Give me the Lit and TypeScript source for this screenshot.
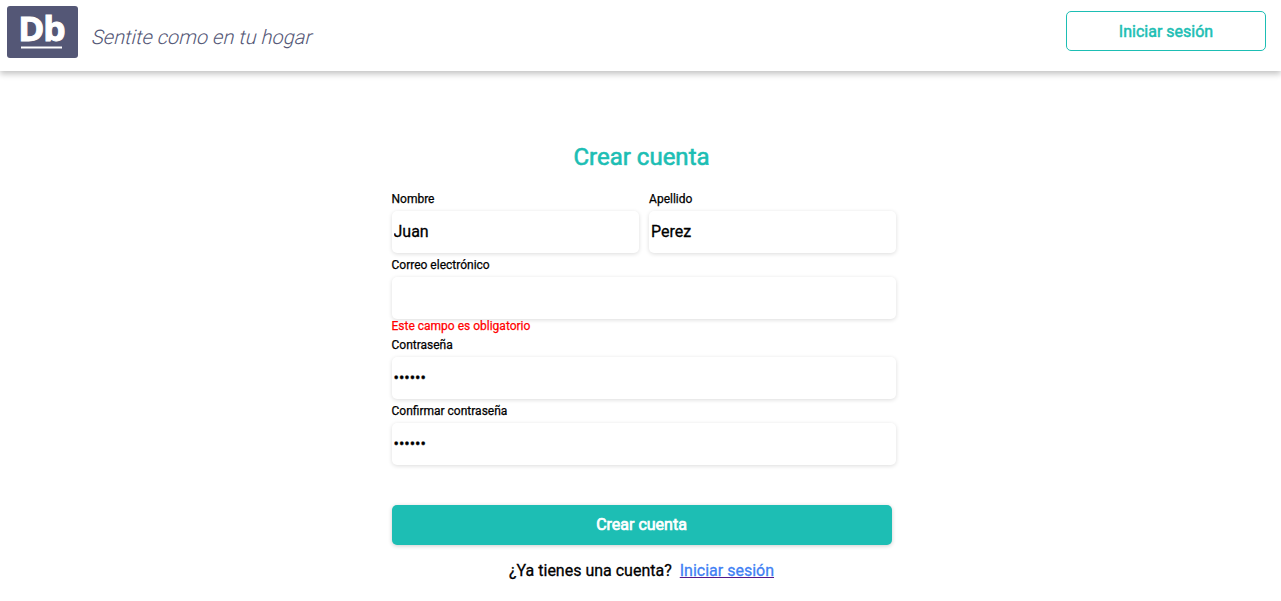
import { LitElement, html, css, nothing } from "lit";
import { customElement, property } from "lit/decorators.js";

@customElement("form-field")
class FormField extends LitElement {
  @property() label = "";
  @property() type = "text";
  @property() value = "";
  @property() error = "";

  static styles = css`
    :host { display: block; flex: 1; min-width: 0; }
    label { display: block; height: 19px; line-height: 15px; font-size: 12px; -webkit-text-stroke: 0.25px currentColor; }
    input {
      display: block; box-sizing: border-box; width: 100%; height: 42px; margin: 0;
      padding: 0 2px 1px; border: none; border-radius: 5px; outline: none;
      background: #fff; color: #000; font: 16px Roboto, sans-serif;
      -webkit-text-stroke: 0.3px currentColor;
      box-shadow: 0 1px 4px rgba(0, 0, 0, 0.14);
    }
    input[type="password"] { padding-bottom: 1px; }
    .error { height: 14px; line-height: 14px; font-size: 12px; color: #f00; -webkit-text-stroke: 0.25px currentColor; }
  `;

  render() {
    return html`
      <label for="control">${this.label}</label>
      <input id="control" type=${this.type} .value=${this.value} />
      ${this.error ? html`<div class="error">${this.error}</div>` : nothing}
    `;
  }
}

@customElement("app-root")
class AppRoot extends LitElement {
  static styles = css`
    :host { display: block; height: 601px; overflow: hidden; background: #fff; color: #000; font-family: Roboto, sans-serif; }
    header {
      display: flex; box-sizing: border-box; height: 71px; padding: 6px 15px 0 7px;
      background: #fff; box-shadow: 0 3px 6px rgba(0, 0, 0, 0.24);
    }
    .logo { display: block; width: 71px; height: 52px; }
    .slogan { margin: 17px 0 0 16px; font-size: 20px; line-height: 28px; font-weight: 300; color: #545776; white-space: nowrap; transform: skewX(-14deg); transform-origin: 0 16%; }
    .login {
      box-sizing: border-box; width: 200px; height: 40px; margin: 5px 0 0 auto; padding: 0;
      border: 1px solid #1dbeb4; border-radius: 5px; background: #fff; color: #1dbeb4;
      font: 16px Roboto, sans-serif; -webkit-text-stroke: 0.5px currentColor;
    }
    main { width: 504.7px; margin-left: 391.5px; padding-top: 70px; }
    h1 { width: 500px; margin: 0; height: 51px; line-height: 32px; font-size: 24px; font-weight: 400; text-align: center; color: #1dbeb4; -webkit-text-stroke: 0.6px currentColor; }
    form { display: flex; flex-direction: column; gap: 5px; }
    .row { display: flex; gap: 10.5px; }
    .fields { display: flex; flex-direction: column; gap: 5px; }
    .submit {
      width: 500px; height: 40px; margin: 35px 0 0; padding: 0 0 1px; border: none; border-radius: 5px;
      background: #1dbeb4; color: #fff; font: 16px Roboto, sans-serif;
      -webkit-text-stroke: 0.7px currentColor; box-shadow: 0 1px 4px rgba(0, 0, 0, 0.2);
    }
    .account { width: 500px; margin: 16px 0 0; line-height: 20px; font-size: 16px; text-align: center; -webkit-text-stroke: 0.3px currentColor; }
    .account a { margin-left: 4px; color: #4080f4; text-decoration: underline #551a8b; }
  `;

  render() {
    return html`
      <header>
        <svg class="logo" viewBox="0 0 71 52" role="img" aria-label="Db">
          <rect width="71" height="52" rx="3" fill="#545776" />
          <text x="11.3" y="34.5" font-family="Open Sans, sans-serif" font-size="33.5" font-weight="700" textLength="46" lengthAdjust="spacingAndGlyphs" letter-spacing="-1.2" stroke="#fff" stroke-width="1" fill="#fff">Db</text>
          <rect x="14" y="40.5" width="41" height="2" fill="#fff" />
        </svg>
        <div class="slogan">Sentite como en tu hogar</div>
        <button class="login">Iniciar sesión</button>
      </header>
      <main>
        <h1>Crear cuenta</h1>
        <form @submit=${(e: Event) => e.preventDefault()}>
          <div class="row">
            <form-field label="Nombre" value="Juan"></form-field>
            <form-field label="Apellido" value="Perez"></form-field>
          </div>
          <div class="fields">
            <form-field label="Correo electrónico" error="Este campo es obligatorio"></form-field>
            <form-field label="Contraseña" type="password" value="123456"></form-field>
            <form-field label="Confirmar contraseña" type="password" value="123456"></form-field>
          </div>
          <button class="submit" type="submit">Crear cuenta</button>
        </form>
        <p class="account">¿Ya tienes una cuenta? <a href="#">Iniciar sesión</a></p>
      </main>
    `;
  }
}
